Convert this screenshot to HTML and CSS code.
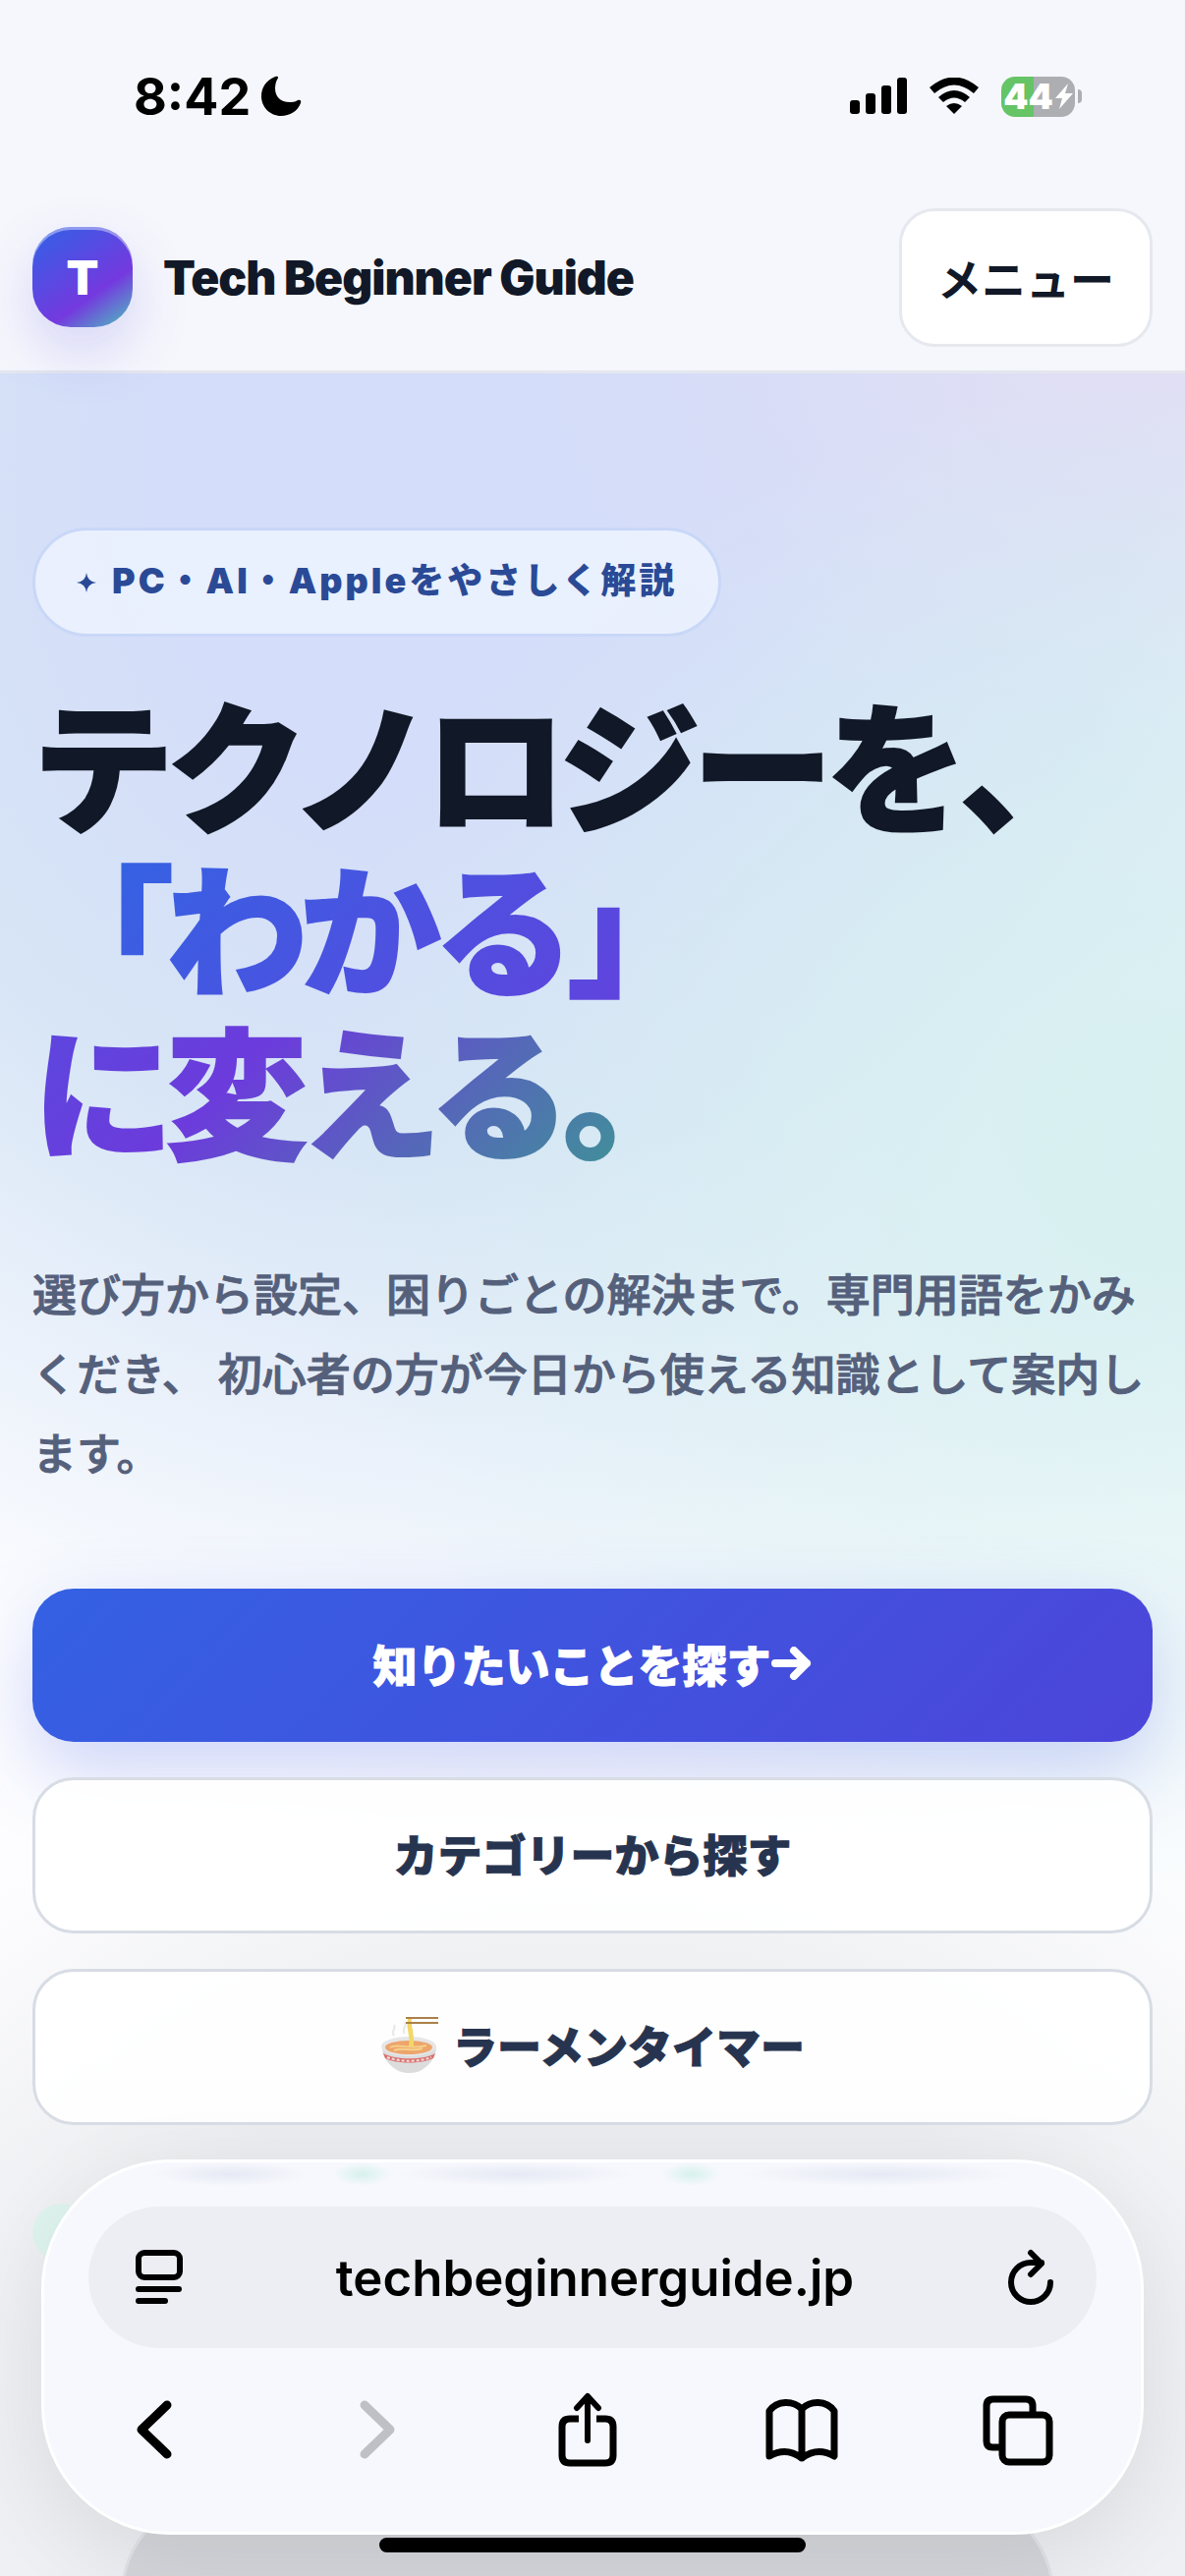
FILE: index.html
```html
<!DOCTYPE html>
<html lang="ja">
  <head>
    <meta charset="UTF-8" />
    <meta name="viewport" content="width=device-width, initial-scale=1.0" />
    <title>Tech Beginner Guide</title>
    <link rel="stylesheet" href="styles.css">
  </head>
  <body>
    <div class="status-bar">
      <div class="status-time">
        <span>8:42</span>
        <svg width="42" height="42" viewBox="0 0 42 42">
          <path d="M15 1C5 5 1 13 1 21c0 11 9 20 20 20 9 0 17-5 20-13 1-3-1-4-3-3-3 2-6 2-8 2-10 0-15-6-15-14 0-4 1-7 2-9 2-3 1-4-2-3z" />
        </svg>
      </div>
      <div class="status-icons">
        <svg width="58" height="38" viewBox="0 0 58 38">
          <rect x="0" y="23" width="10" height="14" rx="3" />
          <rect x="16" y="16" width="10" height="21" rx="3" />
          <rect x="32" y="8" width="10" height="29" rx="3" />
          <rect x="48" y="0" width="10" height="37" rx="3" />
        </svg>
        <svg width="52" height="38" viewBox="0 0 52 38">
          <path d="M1 10Q26-11 51 10L46 16Q26-1 6 16z" />
          <path d="M10 20Q26 6 42 20L37 25Q26 16 15 25z" />
          <path d="M18 29Q26 23 34 29L26 37z" />
        </svg>
        <div class="battery">
          <div class="battery-body">
            <span>44</span>
            <svg width="18" height="26" viewBox="0 0 18 26">
              <path d="M13 0L0 15h7L4 26 18 10h-8z" />
            </svg>
          </div>
          <div class="battery-tip"></div>
        </div>
      </div>
    </div>

    <header class="site-header">
      <a class="brand" href="#">
        <span class="brand-mark">T</span>
        <span class="brand-name">Tech Beginner Guide</span>
      </a>
      <button class="menu-button" type="button">メニュー</button>
    </header>

    <main class="hero">
      <p class="eyebrow">
        <svg width="20" height="20" viewBox="0 0 20 20">
          <path d="M10 0Q11 9 20 10 11 11 10 20 9 11 0 10 9 9 10 0z" />
        </svg>
        <span>PC・AI・Appleをやさしく解説</span>
      </p>
      <h1>テクノロジーを、<br /><span class="gradient-text">「わかる」<br />に変える。</span></h1>
      <p class="lead">
        選び方から設定、困りごとの解決まで。専門用語をかみくだき、 初心者の方が今日から使える知識として案内します。
      </p>
      <div class="actions">
        <a class="button button-primary" href="#">
          知りたいことを探す
          <svg width="42" height="34" viewBox="0 0 42 34">
            <path d="M4 17h32M23 4l13 13-13 13" />
          </svg>
        </a>
        <a class="button" href="#">カテゴリーから探す</a>
        <a class="button" href="#">
          <svg class="ramen" width="60" height="60" viewBox="0 0 60 60">
            <path d="M14 20c-4-5 3-7 0-11M25 18c-4-5 3-8 0-12" fill="none" stroke="#e8e8ea" stroke-width="2" />
            <path d="M2 31c0 12 8 20 15 24 5 4 20 4 25 0 7-4 15-12 15-24z" fill="#dcdcdd" />
            <path d="M3 38c12 7 42 7 53 0l-2 5c-12 6-37 6-49 0z" fill="#d9706c" />
            <path d="M7 42c14 5 32 5 45 0" fill="none" stroke="#f3dedd" stroke-width="2" stroke-dasharray="3 2" />
            <ellipse cx="29" cy="31" rx="28" ry="10" fill="#e6e6e7" />
            <ellipse cx="29" cy="32" rx="24" ry="7" fill="#eda56c" />
            <path d="M10 32c8-5 18 3 37-2M14 35c9-4 19 2 29-2" fill="none" stroke="#f6d08a" stroke-width="2" />
            <path d="M28 3h4c-1 8 3 14 2 28h-5c2-12-3-16-1-28z" fill="#f3d767" />
            <path d="M26 2h33M26 7h33" stroke="#ab8149" stroke-width="2" />
          </svg>
          ラーメンタイマー
        </a>
      </div>
      <ul class="points">
        <li></li>
        <li></li>
        <li></li>
      </ul>
      <div class="preview-card"></div>
    </main>

    <div class="browser-bar">
      <div class="address">
        <button class="icon-button" type="button" aria-label="Page menu">
          <svg width="50" height="56" viewBox="0 0 50 56">
            <rect x="4" y="3" width="42" height="25" rx="6" />
            <path d="M4 40h41M4 52h27" />
          </svg>
        </button>
        <span class="address-text">techbeginnerguide.jp</span>
        <button class="icon-button reload" type="button" aria-label="Reload">
          <svg width="50" height="58" viewBox="0 0 50 58">
            <path d="M45 34a20 20 0 1 1-20-20h11M25 4l11 11-11 11" />
          </svg>
        </button>
      </div>
      <nav class="toolbar">
        <button class="icon-button" type="button" aria-label="Back">
          <svg width="76" height="76" viewBox="0 0 76 76"><path class="chevron" d="M51 13L25 38l26 25" /></svg>
        </button>
        <button class="icon-button" type="button" aria-label="Forward" disabled>
          <svg width="76" height="76" viewBox="0 0 76 76"><path class="chevron" d="M32 13l26 25-26 25" /></svg>
        </button>
        <button class="icon-button" type="button" aria-label="Share">
          <svg width="76" height="76" viewBox="0 0 76 76">
            <path d="M30 27H21q-8 0-8 8v29q0 8 8 8h36q8 0 8-8V35q0-8-8-8h-9" stroke-linecap="butt" />
            <path d="M39 49V5M28 16L39 4l11 12" stroke-width="6" />
          </svg>
        </button>
        <button class="icon-button" type="button" aria-label="Bookmarks">
          <svg width="76" height="76" viewBox="0 0 76 76">
            <path d="M38 17C29 8 13 8 5 19v46q17-10 33 2 16-12 33-2V19C63 8 47 8 38 17zV67" />
          </svg>
        </button>
        <button class="icon-button" type="button" aria-label="Tabs">
          <svg width="76" height="76" viewBox="0 0 76 76">
            <path d="M18 56h-6q-6 0-6-6V14q0-7 7-7h33q7 0 7 7v8" />
            <rect x="22" y="23" width="48" height="48" rx="7" />
          </svg>
        </button>
      </nav>
    </div>
    <div class="home-indicator"></div>
  </body>
</html>
```
FILE: styles.css
```css
* {
  box-sizing: border-box;
}
body {
  margin: 0;
  min-height: 100vh;
  overflow: hidden;
  font-family: Inter, "Noto Sans CJK JP", sans-serif;
  color: #111827;
  background: #f8f9fd;
}
a {
  color: inherit;
  text-decoration: none;
}
button {
  font-family: inherit;
  color: inherit;
}

/* status bar */
.status-bar {
  display: flex;
  justify-content: space-between;
  align-items: center;
  height: 196px;
  padding: 0 105px 0 136px;
  background: #f6f7fc;
}
.status-time {
  display: flex;
  align-items: center;
  gap: 10px;
  font-size: 52px;
  font-weight: 700;
  color: #000;
}
.status-icons {
  display: flex;
  align-items: center;
  gap: 22px;
}
.battery {
  display: flex;
  align-items: center;
  gap: 3px;
}
.battery-body {
  display: flex;
  align-items: center;
  justify-content: center;
  gap: 2px;
  width: 75px;
  height: 41px;
  border-radius: 14px;
  font-size: 36px;
  font-weight: 900;
  color: #fff;
  fill: #fff;
  background: linear-gradient(90deg, #65c466 44%, #adaeb2 44%);
}
.battery-tip {
  width: 4px;
  height: 14px;
  border-radius: 0 4px 4px 0;
  background: #adaeb2;
}

/* header */
.site-header {
  display: flex;
  justify-content: space-between;
  align-items: center;
  height: 184px;
  padding: 0 33px 9px;
  border-bottom: 3px solid #e4e7ee;
  background: #f6f7fc;
}
.brand {
  display: flex;
  align-items: center;
  gap: 31px;
}
.brand-mark {
  display: flex;
  align-items: center;
  justify-content: center;
  width: 102px;
  height: 102px;
  border-radius: 39px;
  color: #fff;
  font-size: 48px;
  font-weight: 900;
  background: linear-gradient(145deg, #2f62e6, #7439df 65%, #4cc4bd);
  box-shadow: 0 24px 60px rgba(79, 70, 229, 0.2), inset 0 3px 0 rgba(255, 255, 255, 0.4);
}
.brand-name {
  font-size: 48px;
  font-weight: 900;
  letter-spacing: -1px;
}
.menu-button {
  height: 141px;
  padding: 0 36px;
  border: 3px solid #e5e8ee;
  border-radius: 36px;
  font-size: 45px;
  font-weight: 700;
  background: #fff;
}

/* hero */
.hero {
  padding: 157px 33px 0;
  background:
    radial-gradient(ellipse 900px 640px at 50% 2020px, rgba(234, 235, 238, 0.95) 50%, rgba(240, 241, 244, 0) 100%),
    radial-gradient(ellipse 900px 800px at 100% 800px, rgba(216, 240, 241, 0.95) 15%, rgba(216, 240, 241, 0) 100%),
    radial-gradient(ellipse 600px 360px at 95% 0, rgba(226, 221, 244, 0.85), rgba(226, 221, 244, 0) 100%),
    radial-gradient(ellipse 1300px 1350px at 40% 100px, #d4ddf9 25%, #d7e5f6 52%, rgba(220, 233, 248, 0) 95%),
    linear-gradient(#fdfdff 1700px, #f4f5fa 2100px);
}
.eyebrow {
  display: inline-flex;
  align-items: center;
  gap: 16px;
  height: 111px;
  margin: 0;
  padding: 0 42px;
  border: 3px solid #c9d7f8;
  border-radius: 56px;
  font-size: 36px;
  font-weight: 900;
  letter-spacing: 3px;
  color: #2a4a96;
  fill: #2a4a96;
  background: rgba(240, 246, 255, 0.75);
}
.eyebrow span {
  padding-bottom: 10px;
}
h1 {
  margin: 54px 0 0;
  font-size: 144px;
  font-weight: 900;
  line-height: 166px;
  letter-spacing: -8px;
  -webkit-text-stroke: 2px;
}
.gradient-text {
  color: transparent;
  background: linear-gradient(135deg, #2f66e4, #6c3bdc 62%, #38a08c);
  -webkit-background-clip: text;
  background-clip: text;
}
.lead {
  margin: 78px 0 96px;
  font-size: 45px;
  font-weight: 500;
  line-height: 81px;
  color: #55607b;
  -webkit-text-stroke: 1px;
}
.actions {
  display: flex;
  flex-direction: column;
  gap: 36px;
}
.button {
  display: flex;
  align-items: center;
  justify-content: center;
  gap: 14px;
  height: 159px;
  padding-bottom: 4px;
  border: 3px solid #d8dce4;
  border-radius: 42px;
  font-size: 45px;
  font-weight: 900;
  color: #27344f;
  background: rgba(255, 255, 255, 0.92);
  -webkit-text-stroke: 1px;
}
.button-primary {
  gap: 0;
  height: 156px;
  border: none;
  color: #fff;
  background: linear-gradient(135deg, #3461e3, #4c45da);
  box-shadow: 0 30px 80px rgba(62, 90, 226, 0.25);
}
.button-primary svg {
  fill: none;
  stroke: #fff;
  stroke-width: 8px;
  stroke-linecap: round;
  stroke-linejoin: round;
}
.points {
  display: flex;
  gap: 280px;
  margin: 80px 0 240px;
  padding: 0;
  list-style: none;
}
.points li {
  width: 58px;
  height: 58px;
  border-radius: 50%;
  background: #dff3ef;
}
.preview-card {
  height: 200px;
  margin: 0 100px 0 90px;
  border: 3px solid #e1e2e7;
  border-radius: 100px;
  background: #d4d5da;
}

/* browser chrome */
.browser-bar {
  position: fixed;
  left: 42px;
  right: 42px;
  bottom: 42px;
  padding: 45px 45px 66px;
  border: 3px solid #fff;
  border-radius: 132px;
  /* page content showing through the glass */
  background:
    radial-gradient(ellipse 30px 12px at 29% 12px, #d6f1ec, transparent),
    radial-gradient(ellipse 30px 12px at 59% 12px, #d6f1ec, transparent),
    radial-gradient(ellipse 80px 12px at 17% 12px, #e6e9f4, transparent),
    radial-gradient(ellipse 120px 12px at 43% 12px, #e6e9f4, transparent),
    radial-gradient(ellipse 140px 12px at 76% 12px, #e6e9f4, transparent),
    #f7f8fd;
  box-shadow: 0 24px 90px rgba(0, 0, 0, 0.08);
}
.address {
  display: flex;
  align-items: center;
  justify-content: space-between;
  height: 144px;
  padding: 0 42px 0 47px;
  border-radius: 72px;
  background: #edeef3;
}
.address-text {
  font-size: 51px;
  font-weight: 600;
  color: #000;
}
.toolbar {
  display: flex;
  justify-content: space-between;
  margin: 45px 42px 0 29px;
}
.icon-button {
  display: flex;
  padding: 0;
  border: none;
  background: none;
}
.icon-button svg {
  fill: none;
  stroke: #000;
  stroke-width: 7px;
  stroke-linecap: round;
  stroke-linejoin: round;
}
.address .icon-button svg {
  stroke-width: 6px;
}
.icon-button .chevron {
  stroke-width: 9px;
}
.icon-button:disabled svg {
  stroke: #bfc0c5;
}
.home-indicator {
  position: fixed;
  left: 32%;
  right: 32%;
  bottom: 24px;
  height: 15px;
  border-radius: 8px;
  background: #000;
}
```
